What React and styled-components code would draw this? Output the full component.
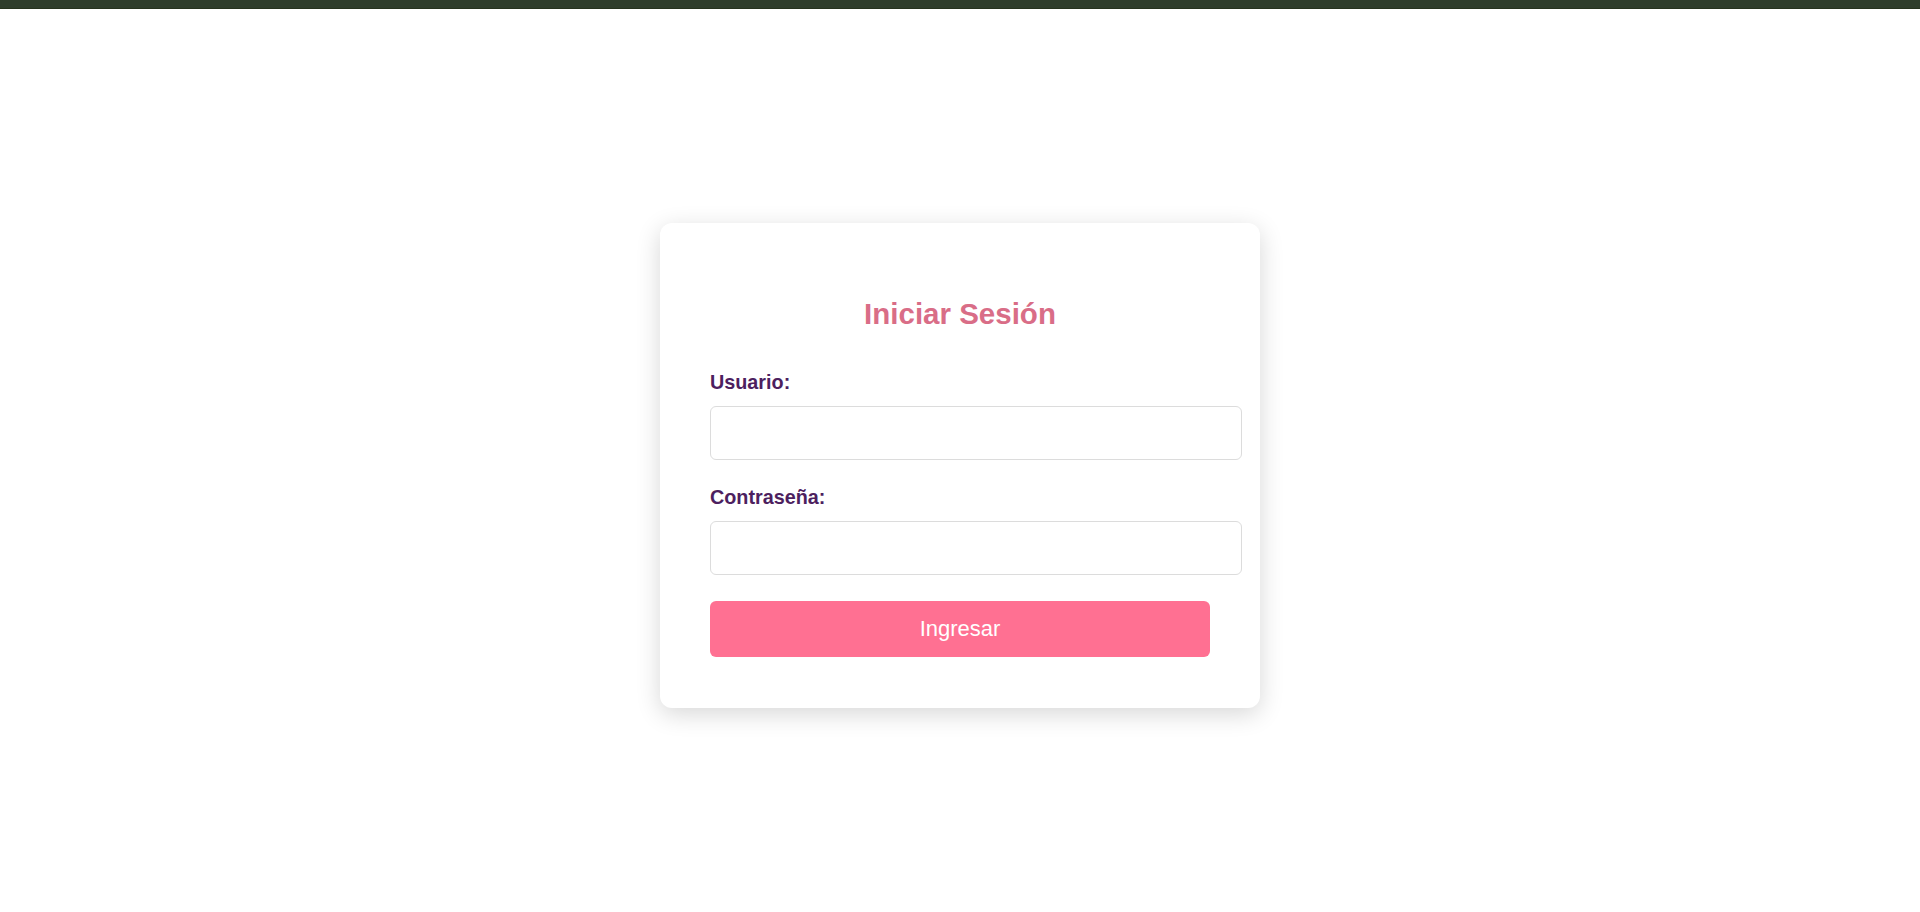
import React from "react";
import styled, { createGlobalStyle } from "styled-components";

const GlobalStyle = createGlobalStyle`
  * {
    box-sizing: content-box;
  }
  html,
  body {
    margin: 0;
    padding: 0;
    background: #ffffff;
    font-family: "Liberation Sans", Arial, sans-serif;
  }
`;

const Page = styled.div`
  display: flex;
  flex-direction: column;
  height: 100vh;
  overflow: hidden;
`;

const TopBar = styled.div`
  height: 8px;
  flex-shrink: 0;
  background: #2f3d2c;
  border-bottom: 1px solid #27331f;
`;

const Main = styled.main`
  flex: 1;
  display: flex;
  align-items: center;
  justify-content: center;
  padding-top: 9px;
`;

const Card = styled.form`
  width: 500px;
  padding: 50px 50px 51px;
  background: #ffffff;
  border-radius: 12px;
  box-shadow: 0 6px 24px rgba(0, 0, 0, 0.16);
`;

const Title = styled.h2`
  margin: 24px 0 40px;
  text-align: center;
  font-size: 29.5px;
  font-weight: 700;
  color: #d96d87;
`;

const Field = styled.div`
  margin-bottom: 26px;
`;

const Label = styled.label`
  display: block;
  margin-bottom: 12px;
  font-size: 19.8px;
  font-weight: 700;
  color: #4d1f5f;
`;

const Input = styled.input`
  display: block;
  width: 100%;
  padding: 15px;
  margin: 0;
  border: 1px solid #dcdcdc;
  border-radius: 6px;
  font-family: "Liberation Sans", Arial, sans-serif;
  font-size: 19.2px;
  outline: none;
`;

const Button = styled.button`
  display: block;
  box-sizing: border-box;
  width: 100%;
  height: 56px;
  border: none;
  border-radius: 6px;
  background: #ff7092;
  color: #ffffff;
  font-family: "Liberation Sans", Arial, sans-serif;
  font-size: 22px;
  cursor: pointer;
`;

export default function App() {
  return (
    <>
      <GlobalStyle />
      <Page>
        <TopBar />
        <Main>
          <Card onSubmit={(e) => e.preventDefault()}>
            <Title>Iniciar Sesión</Title>
            <Field>
              <Label htmlFor="usuario">Usuario:</Label>
              <Input id="usuario" type="text" />
            </Field>
            <Field>
              <Label htmlFor="password">Contraseña:</Label>
              <Input id="password" type="password" />
            </Field>
            <Button type="submit">Ingresar</Button>
          </Card>
        </Main>
      </Page>
    </>
  );
}
